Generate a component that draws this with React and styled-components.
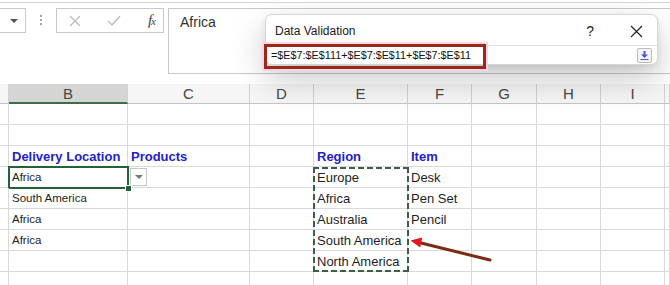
import React from 'react'
import styled, { createGlobalStyle } from 'styled-components'

const GlobalStyle = createGlobalStyle`
  html, body { margin: 0; padding: 0; background: #fff; }
  body { font-family: "Liberation Sans", Arial, sans-serif; color: #222; }
`

const Page = styled.div`
  position: relative;
  width: 670px;
  height: 285px;
  overflow: hidden;
  padding-top: 2px;
  box-sizing: border-box;
`

/* ---------- formula row ---------- */
const Toolbar = styled.div`
  display: flex;
  align-items: flex-start;
  height: 82px;
  box-sizing: border-box;
  border-top: 1px solid #d6d6d6;
  padding-top: 5px;
`

const NameBox = styled.div`
  margin-left: -10px;
  width: 36px;
  height: 25px;
  box-sizing: border-box;
  border: 1px solid #c8c8c8;
  display: flex;
  align-items: center;
  justify-content: flex-end;
  padding-right: 7px;
`

const Caret = styled.span`
  width: 0;
  height: 0;
  border-left: 4px solid transparent;
  border-right: 4px solid transparent;
  border-top: 4px solid ${p => p.$color || '#555'};
`

const Dots = styled.div`
  margin-left: 14px;
  margin-top: 7px;
  display: flex;
  flex-direction: column;
  gap: 2px;
  span { width: 2px; height: 2px; background: #888; border-radius: 1px; }
`

const FxButtons = styled.div`
  margin-left: 14px;
  width: 108px;
  height: 25px;
  box-sizing: border-box;
  border: 1px solid #c8c8c8;
  display: flex;
  align-items: center;
  justify-content: space-between;
  padding: 0 8px 0 12px;
`

const Fx = styled.span`
  font-family: "Liberation Serif", "Times New Roman", serif;
  font-style: italic;
  font-size: 15px;
  color: #444;
  letter-spacing: -1px;
  small { font-size: 11px; }
`

const FormulaBar = styled.div`
  margin-left: 4px;
  margin-right: -6px;
  flex: 1;
  height: 66px;
  box-sizing: border-box;
  border: 1px solid #c8c8c8;
  padding: 5px 0 0 11px;
  font-size: 14px;
  color: #333;
`

/* ---------- sheet ---------- */
const Grid = styled.div`
  display: grid;
  grid-template-columns: 9px 119px 122px 64px 94px 64px 65px 64px 64px 1fr;
  grid-template-rows: 20px repeat(9, 21px);
`

const HeadCell = styled.div`
  grid-row: 1;
  grid-column: ${p => p.$c};
  background: ${p => (p.$active ? '#d3d6d3' : '#f6f6f6')};
  border-right: 1px solid #d2d2d2;
  border-bottom: ${p => (p.$active ? '2px solid #3f6a4e' : '1px solid #c4c4c4')};
  display: flex;
  align-items: center;
  justify-content: center;
  font-size: 15px;
  color: #474747;
`

const Cell = styled.div`
  grid-row: ${p => p.$r};
  grid-column: ${p => p.$c};
  position: relative;
  border-right: 1px solid #d9d9d9;
  border-bottom: 1px solid #d9d9d9;
  display: flex;
  align-items: center;
  padding-left: 3px;
  white-space: nowrap;
  font-size: ${p => (p.$kind === 'small' ? '11.5px' : '13px')};
  font-weight: ${p => (p.$kind === 'bold' ? 700 : 400)};
  color: ${p => (p.$kind === 'bold' ? '#2522c2' : '#1e1e1e')};

  ${p => p.$selected && `
    &::after {
      content: '';
      position: absolute;
      inset: -1px -2px -2px -1px;
      border: 2px solid #24603a;
    }
    &::before {
      content: '';
      position: absolute;
      right: -5px;
      bottom: -5px;
      width: 5px;
      height: 5px;
      background: #24603a;
      border: 1px solid #fff;
      z-index: 2;
    }
  `}
`

const DropButton = styled.div`
  margin-left: -1px;
  width: 17px;
  height: 18px;
  box-sizing: border-box;
  border: 1px solid #c6c6c6;
  background: #fff;
  display: flex;
  align-items: center;
  justify-content: center;
`

const Marquee = styled.div`
  grid-column: 5;
  grid-row: 5 / span 5;
  margin: 0 -1px 0 -1px;
  z-index: 1;
  pointer-events: none;
  --ant: #3f5e49;
  background:
    repeating-linear-gradient(90deg, var(--ant) 0 6px, transparent 6px 9px) top / 100% 2px no-repeat,
    repeating-linear-gradient(90deg, var(--ant) 0 6px, transparent 6px 9px) bottom / 100% 2px no-repeat,
    repeating-linear-gradient(180deg, var(--ant) 0 6px, transparent 6px 9px) left / 2px 100% no-repeat,
    repeating-linear-gradient(180deg, var(--ant) 0 6px, transparent 6px 9px) right / 2px 100% no-repeat;
`

/* ---------- dialog ---------- */
const Dialog = styled.div`
  position: absolute;
  left: 265px;
  top: 14px;
  width: 393px;
  height: 51px;
  box-sizing: border-box;
  background: #fff;
  border: 1px solid #d6d6d6;
  border-radius: 7px;
  box-shadow: 0 14px 34px rgba(0, 0, 0, 0.22), 0 2px 6px rgba(0, 0, 0, 0.08);
  display: flex;
  flex-direction: column;
  z-index: 5;
`

const TitleRow = styled.div`
  height: 28px;
  display: flex;
  align-items: center;
  padding: 2px 14px 0 9px;
  font-size: 12px;
  color: #1b1b1b;
`

const Title = styled.span`
  flex: 1;
`

const Help = styled.span`
  font-size: 14px;
  margin-right: 36px;
`

const InputRow = styled.div`
  position: relative;
  flex: 1;
  display: flex;
  align-items: center;
  border-top: 1px solid #e3e3e3;
  padding: 0 5px 0 5px;
  font-size: 10.8px;
  color: #111;
`

const InputText = styled.span`
  flex: 1;
`

const Collapse = styled.div`
  width: 15px;
  height: 15px;
  box-sizing: border-box;
  border: 1px solid #b9bcc4;
  border-radius: 2px;
  background: #f4f5f8;
  display: flex;
  align-items: center;
  justify-content: center;
`

const Highlight = styled.div`
  position: absolute;
  left: -2px;
  top: -2px;
  width: 222px;
  height: 25px;
  box-sizing: border-box;
  border: 3px solid #9a2a16;
  box-shadow: 0 0 0 2px #fbd3ec;
  pointer-events: none;
`

const ArrowLayer = styled.svg`
  position: absolute;
  left: 0;
  top: 0;
  z-index: 3;
  pointer-events: none;
`

const rows = [
  {},
  {},
  { B: ['Delivery Location', 'bold'], C: ['Products', 'bold'], E: ['Region', 'bold'], F: ['Item', 'bold'] },
  { B: ['Africa', 'small', true], C: ['drop'], E: ['Europe'], F: ['Desk'] },
  { B: ['South America', 'small'], E: ['Africa'], F: ['Pen Set'] },
  { B: ['Africa', 'small'], E: ['Australia'], F: ['Pencil'] },
  { B: ['Africa', 'small'], E: ['South America'] },
  { E: ['North America'] },
  {},
]

const COLS = ['', 'B', 'C', 'D', 'E', 'F', 'G', 'H', 'I', '']

function App() {
  return (
    <Page>
      <GlobalStyle />

      <Toolbar>
        <NameBox><Caret /></NameBox>
        <Dots><span /><span /><span /></Dots>
        <FxButtons>
          <svg width="12" height="12" viewBox="0 0 12 12">
            <path d="M1 1 L11 11 M11 1 L1 11" stroke="#bdbdbd" strokeWidth="1.4" fill="none" />
          </svg>
          <svg width="14" height="12" viewBox="0 0 14 12">
            <path d="M1 6 L5 10 L13 1" stroke="#bdbdbd" strokeWidth="1.4" fill="none" />
          </svg>
          <Fx>f<small>x</small></Fx>
        </FxButtons>
        <FormulaBar>Africa</FormulaBar>
      </Toolbar>

      <Grid>
        {COLS.map((col, i) => (
          <HeadCell key={`h-${i}`} $c={i + 1} $active={col === 'B'}>{col}</HeadCell>
        ))}
        {rows.map((row, r) =>
          COLS.map((col, c) => {
            const val = row[col]
            if (val && val[0] === 'drop') {
              return (
                <Cell key={`${r}-${c}`} $r={r + 2} $c={c + 1}>
                  <DropButton><Caret $color="#777" /></DropButton>
                </Cell>
              )
            }
            return (
              <Cell key={`${r}-${c}`} $r={r + 2} $c={c + 1} $kind={val && val[1]} $selected={val && val[2]}>
                {val ? val[0] : ''}
              </Cell>
            )
          })
        )}
        <Marquee />
      </Grid>

      <Dialog>
        <TitleRow>
          <Title>Data Validation</Title>
          <Help>?</Help>
          <svg width="13" height="13" viewBox="0 0 13 13">
            <path d="M1 1 L12 12 M12 1 L1 12" stroke="#222" strokeWidth="1.2" fill="none" />
          </svg>
        </TitleRow>
        <InputRow>
          <InputText>=$E$7:$E$111+$E$7:$E$11+$E$7:$E$11</InputText>
          <Collapse>
            <svg width="9" height="10" viewBox="0 0 9 10">
              <path d="M4.5 1 V6" stroke="#4b55c8" strokeWidth="2" />
              <path d="M1 4.5 L4.5 8 L8 4.5 Z" fill="#4b55c8" />
              <path d="M0.5 9.5 H8.5" stroke="#4b55c8" strokeWidth="1" />
            </svg>
          </Collapse>
          <Highlight />
        </InputRow>
      </Dialog>

      <ArrowLayer width="670" height="285">
        <line x1="490" y1="260" x2="419" y2="242.5" stroke="#7b2b12" strokeWidth="3" strokeLinecap="round" />
        <polygon points="410.5,240.5 422.3,237.6 420.2,247.4" fill="#e3161d" />
      </ArrowLayer>
    </Page>
  )
}

export default App
